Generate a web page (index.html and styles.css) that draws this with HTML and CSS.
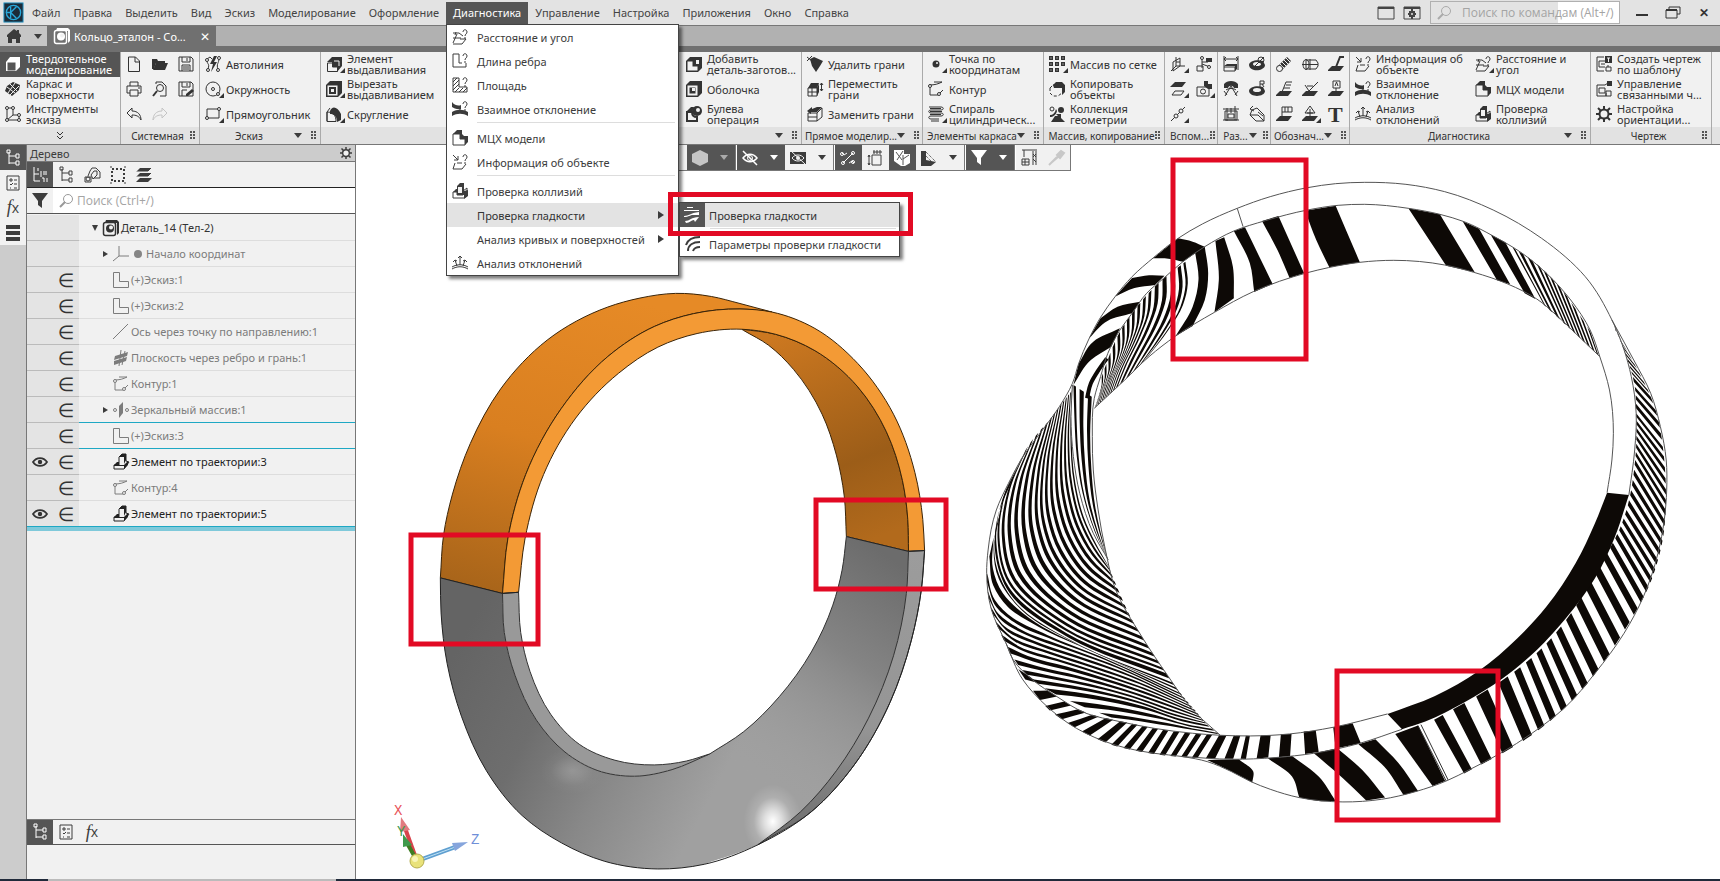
FILE: index.html
```html
<!DOCTYPE html>
<html lang="ru">
<head>
  <meta charset="UTF-8">
  <meta name="viewport" content="width=device-width, initial-scale=1.0">
  <title>Кольцо_эталон</title>
  <link rel="stylesheet" href="styles.css">
</head>
<body>
  <!-- Icon set -->
  <svg class="icon-set" aria-hidden="true">
    <defs>
      <g id="i-app"><rect width="20" height="20" fill="#1d2b38" stroke="#1d8fc0"/><circle cx="10" cy="10" r="7.5" fill="none" stroke="#29a9dc" stroke-width="1.4"/><path d="M7 4v12M7 10l6-6M7 10l6 6M2 10h5" fill="none" stroke="#29a9dc" stroke-width="1.4"/></g>
      <g id="i-home"><path d="M8 1L1 7v2h1v6h4v-4h4v4h4V9h1V7l-2-2V2h-2v1z" fill="currentColor"/></g>
      <g id="i-part"><rect x="0.5" y="2.500" width="12" height="13" rx="2" fill="none" stroke="currentColor" stroke-width="1.500"/><path d="M3 0h11l2 2v11l-2 2V3H2z" fill="currentColor"/><circle cx="7" cy="8.500" r="4" fill="currentColor"/><circle cx="8" cy="7.500" r="2" class="hole"/></g>
      <g id="i-cube"><path d="M1 6l4-5h10v10l-4 4H1z" fill="currentColor"/><rect x="2.500" y="6.500" width="8" height="8" class="cube-face"/></g>
      <g id="i-surf"><path d="M8 1l7 3-1 5-7 6-7-5 2-5z" fill="currentColor"/><path d="M5 3l7 7M2 6l8 6M10 2L3 12M14 5L5 14" stroke="#f1f1f1"/></g>
      <g id="i-sketch"><path d="M2 1v13h12V9H8V2H2M2 14L8 9" class="ln"/><circle cx="2" cy="2" r="1.500" class="dot"/><circle cx="8" cy="2" r="1.500" class="dot"/><circle cx="2" cy="14" r="1.500" class="dot"/><circle cx="14" cy="14" r="1.500" class="dot"/><circle cx="14" cy="9" r="1.500" class="dot"/></g>
      <g id="i-chevrons"><path d="M5 4l3 3 3-3M5 8l3 3 3-3" class="ln"/></g>
      <g id="i-file"><path d="M2.500 1h7l4 4v10.500h-11zM9 1v5h5" class="ln"/></g>
      <g id="i-open"><path d="M0 3h5l1 2h7v2H4L2 13H0z" fill="currentColor"/><path d="M4 7h12l-3 7H1z" fill="currentColor"/></g>
      <g id="i-save"><path d="M1 1h12l2 2v12H1zM4 1v5h8V1M4 15V9h8v6M9 2v3M5 11h6M5 13h6" class="ln"/></g>
      <g id="i-print"><path d="M4 5V1h8v4M4 12H1V5h14v7h-3M4 9h8v6H4zM12 7h2" class="ln"/></g>
      <g id="i-preview"><path d="M4 3V1h6l4 4v10H8" class="ln"/><circle cx="8" cy="7" r="3.500" class="ln"/><path d="M5 10l-4 5" class="ln thick"/></g>
      <g id="i-saveas"><path d="M1 1h12l2 2v12H1zM4 1v5h8V1M4 15V9h5M9 2v3" class="ln"/><path d="M8 13l6-5 2 2-6 5H8z" fill="currentColor"/></g>
      <g id="i-undo"><path d="M6 2L1 7l5 5V9c4 0 7 1 9 5 0-5-3-9-9-9z" class="ln"/></g>
      <g id="i-redo"><path d="M10 2l5 5-5 5V9c-4 0-7 1-9 5 0-5 3-9 9-9z" fill="none" stroke="#c4c4c4"/></g>
      <g id="i-autoline"><path d="M2 4c0 5 3 3 1 9M14 2c0 6-3 5-1 12M2 3l3-2 2 2" class="ln"/><path d="M9 0L5 8h3l-2 8 6-10H9l3-6z" fill="currentColor"/><circle cx="2" cy="4" r="1.500" class="dot"/><circle cx="3" cy="14" r="1.500" class="dot"/><circle cx="14" cy="2" r="1.500" class="dot"/><circle cx="13" cy="14" r="1.500" class="dot"/></g>
      <g id="i-circle"><circle cx="8" cy="8" r="7" class="ln"/><circle cx="8" cy="8" r="1.500" class="dot"/><circle cx="13" cy="13" r="1.500" class="dot"/></g>
      <g id="i-rect"><path d="M2 3h12v9H2z" class="ln"/><circle cx="14" cy="3" r="1.500" class="dot"/><circle cx="2" cy="12" r="1.500" class="dot"/></g>
      <g id="i-extrude"><path d="M1 6l5-5h10v9l-5 6v-5h-5V6z" fill="currentColor"/><path d="M1.500 7h5v4h5v4.500h-10z" fill="#f1f1f1" stroke="currentColor"/><path d="M8 5h5v5" fill="none" stroke="#f1f1f1"/></g>
      <g id="i-cut"><path d="M0 4l4-4h12v12l-4 4H0z" fill="currentColor"/><rect x="1.500" y="4.500" width="10" height="10" fill="#f1f1f1"/><rect x="4" y="7" width="5" height="5" fill="none" stroke="currentColor" stroke-width="2"/></g>
      <g id="i-fillet"><path d="M4 5C6 0 11 0 15 8v6l-4 2c0-6-3-8-7-8z" fill="currentColor"/><path d="M1 15V6l3-4M1 6c6 0 9 3 9 9.500H1z" class="ln"/></g>
      <g id="i-addpart"><path d="M0 5l4-4h12v11l-4 4H0z" fill="currentColor"/><path d="M1.500 5.500h5v5h5v4h-10z" fill="#f1f1f1"/><path d="M10 4h3v4h-3z" fill="#f1f1f1"/></g>
      <g id="i-shell"><path d="M0 4l4-4h12v12l-4 4H0z" fill="currentColor"/><rect x="1.500" y="4.500" width="10" height="10" fill="#f1f1f1"/><rect x="3.500" y="6.500" width="6" height="6" fill="currentColor"/><path d="M6 7h3v3H6z" fill="#f1f1f1"/></g>
      <g id="i-bool"><path d="M1 15V6h5c0 3 2 5 5 5v4z" class="ln thick"/><path d="M1 5l4-4h3L6 6z" fill="currentColor"/><circle cx="11" cy="5" r="5" fill="currentColor"/><circle cx="12" cy="4" r="2" fill="#f1f1f1"/></g>
      <g id="i-delface"><path d="M3 3l4-2 9 4-3 5-4 6-4-6z" fill="currentColor"/><path d="M0 1l5 4M5 0L0 5" class="ln"/></g>
      <g id="i-moveface"><path d="M1 7h9v8H1zM1 11h9M5 7v8" class="ln"/><path d="M1 7l3-5h8l-2 5zM10 7l2-4v8l-2 4z" fill="currentColor"/><path d="M14.500 2v8M13 4l1.500-2L16 4M13 8l1.500 2L16 8" class="ln"/></g>
      <g id="i-repface"><path d="M1 7h9v8H1zM1 11h9M10 7l5-5v9l-5 4" class="ln"/><path d="M0 5l5-4v2l5-2h5l-5 5H4v2z" fill="currentColor"/></g>
      <g id="i-point"><circle cx="8" cy="8" r="3.500" fill="currentColor"/><circle cx="9" cy="7" r="1" fill="#f1f1f1"/></g>
      <g id="i-contour"><path d="M1 4c6 0 9-1 13-3M2 5v9h8l5-5M14 1h-8" class="ln"/><circle cx="2" cy="5" r="1.500" class="dot"/><circle cx="11" cy="13" r="1.500" class="dot"/></g>
      <g id="i-spiral"><path d="M1 1h12c3 0 3 3 0 3H3C0 4 0 7 3 7h10c3 0 3 3 0 3H3c-3 0-3 3 0 3h8M2 2.500h11M2 5.500h12M2 8.500h11M3 15h8" class="ln"/></g>
      <g id="i-grid"><path d="M0 0h4v4H0zM6 0h4v4H6zM12 0h4v4h-4zM0 6h4v4H0zM6 6h4v4H6zM12 6h4v4h-4zM0 12h4v4H0zM6 12h4v4H6z" fill="currentColor"/><path d="M1.500 1.500h1v1h-1zM7.500 1.500h1v1h-1zM13.500 1.500h1v1h-1zM1.500 7.500h1v1h-1zM7.500 7.500h1v1h-1zM13.500 7.500h1v1h-1zM1.500 13.500h1v1h-1zM7.500 13.500h1v1h-1z" fill="#f1f1f1"/></g>
      <g id="i-copy"><path d="M4 4l3-3h6l3 3v7l-3 3V7H5z" fill="currentColor"/><path d="M4 4h6l3 3M1 7l3-3M1 7v5l3 3h5l4-3" class="ln" stroke-dasharray="3 2"/></g>
      <g id="i-coll"><circle cx="3" cy="3" r="2" class="ln"/><circle cx="12" cy="4" r="3" fill="currentColor"/><path d="M2 16l4-6h3l-2-2h5v4l4 4zM1 9c3 0 5-2 6-6l1 2c-1 4-4 6-7 6z" fill="currentColor"/></g>
      <g id="i-plane3"><path d="M6 1v9l-5 5M6 10h9M3 6l7-4v8l-7 5zM6 6h4" class="ln"/></g>
      <g id="i-lcs"><path d="M6 2v10M6 6h6M6 8l8 3M1 10h6v5H1z" class="ln"/><path d="M10 2h6v4h-6z" fill="currentColor"/><circle cx="6" cy="2" r="1.500" class="dot"/><circle cx="13" cy="11" r="1.500" class="dot"/></g>
      <g id="i-planes"><path d="M5 1h11l-4 5H0z" fill="currentColor"/><path d="M5 10h9l-3 4H2z" class="ln"/></g>
      <g id="i-cam"><path d="M1 6h12v9H1z" class="ln"/><circle cx="7" cy="10.500" r="2.500" class="ln"/><path d="M8 0h4v3h4v5h-4L8 5z" fill="currentColor"/></g>
      <g id="i-axis"><path d="M1 15L15 1" class="ln"/><circle cx="6" cy="10" r="2" class="dot"/><circle cx="11" cy="5" r="2" class="dot"/></g>
      <g id="i-dim1"><path d="M1 0v11M15 0v14M1 3h14M1 3l2-2M1 3l2 2M15 3l-2-2M15 3l-2 2M1 11h11v4H1z" class="ln"/><path d="M1 10l3-2h10v5l-2 2v-5z" fill="currentColor"/></g>
      <g id="i-dim2"><path d="M0 9c0-4 8-6 14-4l2 4c0 6-15 8-16 0z" fill="currentColor"/><ellipse cx="8" cy="8" rx="4" ry="2" fill="#f1f1f1"/><circle cx="12" cy="4" r="3" class="ln"/><path d="M3 13L15 1" class="ln"/></g>
      <g id="i-dim3"><path d="M1 3c3-4 11-4 14 0v4h-4c-1-3-5-3-6 0H1z" fill="currentColor"/><path d="M8 5l-6 10M8 5l6 10M3 9c2-2 8-2 10 0M1 10l3 4M15 10l-3 4" class="ln"/></g>
      <g id="i-dim4"><path d="M0 10c0-4 8-6 14-4l2 4c0 6-15 7-16 0z" fill="currentColor"/><ellipse cx="8" cy="9" rx="4" ry="2" fill="#f1f1f1"/><path d="M11 6V0h4v3h-4M13 3l2 3" class="ln"/></g>
      <g id="i-dim5"><path d="M2 5h12v9H2zM5 8h6v4H5zM4 2v13M12 0v14M0 3h16M0 14h16M8 2v5" class="ln"/></g>
      <g id="i-dim6"><path d="M3 4L1 9l6 6h8V9L8 2zM1 9h8l6 6M4 0L1 3l4 2M9 6l5 4" class="ln"/></g>
      <g id="i-thread"><path d="M1 11L11 1l4 4L5 15z" fill="currentColor"/><path d="M4 8l4 4M6 6l4 4M8 4l4 4M10 2l4 4" stroke="#f1f1f1"/><circle cx="3.500" cy="12.500" r="3" class="dot"/></g>
      <g id="i-mark"><path d="M4 4h10l2 3v3l-2 3H4zM0 8.500h16M8 3v11" class="ln"/><ellipse cx="4" cy="8.500" rx="3" ry="5" class="ln"/></g>
      <g id="i-lead"><path d="M0 14l4-4h12l-4 5H0z" fill="currentColor"/><path d="M16 1h-4L8 11" class="ln thick"/></g>
      <g id="i-base"><path d="M0 14l4-4h12l-4 5H0z" fill="currentColor"/><path d="M16 1h-6L6 11M10 4h5M8 7h6" class="ln"/></g>
      <g id="i-rough"><path d="M0 14l4-4h12l-4 5H0z" fill="currentColor"/><path d="M3 4l4 6 9-9M5 5h6" class="ln"/></g>
      <g id="i-datum"><path d="M0 14l4-4h12l-4 5H0z" fill="currentColor"/><path d="M5 0h7v7H5zM8 7v4M7 5l1.500-4L10 5" class="ln"/></g>
      <g id="i-tol"><path d="M0 14l4-4h12l-4 5H0z" fill="currentColor"/><path d="M6 1h10v5H6zM9 1v5M12 1v5M6 6v5" class="ln"/></g>
      <g id="i-pos"><path d="M0 14l4-4h12l-4 5H0z" fill="currentColor"/><path d="M8 0l5 7H3zM8 3v8M5 7h6" class="ln"/></g>
      <g id="i-info"><path d="M1 1l5 5M6 2v4H2M3 9l-2 6h9l4-5M5 9h5" class="ln"/><path d="M11 3c0-3 4-3 4 0 0 2-2 2-2 4M13 8v2" class="ln"/></g>
      <g id="i-angle"><path d="M1 4h6M4 3l-1 3M7 4l4 3M1 9h8M5 5l-4 9M1 15h9l4-5H8" class="ln"/><path d="M11 3c0-3 4-3 4 0 0 2-2 2-2 4M13 8v2" class="ln"/></g>
      <g id="i-edge"><path d="M1 1v13h13v-4M1 1h6v9h3" class="ln"/><path d="M11 3c0-3 4-3 4 0 0 2-2 2-2 4M13 8v2" class="ln"/></g>
      <g id="i-area"><path d="M1 1h6v9h8v5H1zM1 5l4-4M1 9l6-6M1 13l6-6M3 15l4-4M7 15l4-4M11 15l4-4" class="ln"/><path d="M11 3c0-3 4-3 4 0 0 2-2 2-2 4M13 8v2" class="ln"/></g>
      <g id="i-dev"><path d="M0 1c3 4 7 4 9 3v4C5 9 2 7 0 6zM0 11c5-3 11-3 16 0v4c-5-3-11-3-16 0z" fill="currentColor"/><path d="M8 7v4M6 9l2 2 2-2" class="ln"/><path d="M11 3c0-3 4-3 4 0 0 2-2 2-2 4M13 8v2" class="ln"/></g>
      <g id="i-mass"><path d="M1 4l4-4h5v4l2 2h4v6l-3 3V9H8V4z" fill="currentColor"/><path d="M1 4h7v5h5v6H1z" class="ln"/></g>
      <g id="i-coli"><path d="M1 9h4v3h6V8l4-3v8l-3 2H1z" class="ln"/><path d="M1 9l3-3h1V3l3-3h4v8l4-1v6l-4 3v-4H5V9z" fill="currentColor"/><path d="M6 4h4v6H6z" fill="#f1f1f1"/></g>
      <g id="i-curv"><path d="M0 14c5-3 11-3 16 0M0 12c5-3 11-3 16 0M8 1v9M3 5l2 6M13 5l-2 6M6 3l2-2 2 2M1 7l2-2 2 1M15 7l-2-2-2 1" class="ln"/></g>
      <g id="i-zebra"><path d="M3 0h6v1H3zM0 3h15v1H0zM0 9c5 0 6-3 15-4v3H9c-3 0-4 2-9 2zM1 14c5 0 6-4 14-4l-4 5-1-2c-3 0-4 3-8 3z" fill="currentColor"/></g>
      <g id="i-zparam"><path d="M1 9C3 3 8 1 15 1M3 15C3 9 8 6 15 6M8 15c1-3 3-4 7-4" fill="none" stroke="currentColor" stroke-width="2"/></g>
      <g id="i-draw"><path d="M1 1h7M1 1v14h7M3 5h6M3 5v6h6M5 8h4M10 11h5v4h-5zM12 9v2" class="ln"/><path d="M9 0h7v7H9z" fill="currentColor"/><path d="M11 2h3M12.500 2v4" stroke="#f1f1f1"/></g>
      <g id="i-link"><path d="M9 4H1v11h9v-3M3 7h6v5H3zM10 10h5v5h-5zM9 4l3-2" class="ln"/><path d="M11 0h5v5h-5z" fill="currentColor"/></g>
      <g id="i-gear"><path d="M8 0v16M0 8h16M2 2l12 12M14 2L2 14" stroke="currentColor" stroke-width="2"/><circle cx="8" cy="8" r="4.500" class="dot thick"/></g>
      <g id="i-tree"><path d="M4 2v12M4 6h7M4 13h7M11 4h3v4h-3zM11 11h3v4h-3zM2 0h3v3H2z" class="ln"/></g>
      <g id="i-treenum"><path d="M2 0v14h6M2 7h5M9 4v6M12 4v4M14 4v4M10 11h2v4M15 11v4M6 1v3" class="ln"/></g>
      <g id="i-list"><path d="M2 1h12v14H2zM5 4h2v2H5zM9 5h3M5 9l1 1 2-2M9 9h3M5 13l1 0M9 13h3" class="ln"/></g>
      <g id="i-stack"><path d="M1 0h14v4H1zM1 6h14v4H1zM1 12h14v4H1z" fill="currentColor"/></g>
      <g id="i-rel"><path d="M1 10h6v5H1zM4 9l2-5 2-3h4l4 4v6h-6" class="ln"/><path d="M7 8l3-4h3v4l-4 4z" class="ln"/><circle cx="4" cy="12" r="2" class="ln"/></g>
      <g id="i-sel"><path d="M2 2h12v12H2z" class="ln thick" stroke-dasharray="2 2"/><path d="M0 0h2M14 0h2M0 16h2M14 16h2" class="ln"/></g>
      <g id="i-layers"><path d="M4 1h12l-4 4H0zM4 6h12l-4 4H0zM4 11h12l-4 4H0z" fill="currentColor"/><path d="M0 5h12l4-4M0 10h12l4-4" fill="none" stroke="#f1f1f1"/></g>
      <g id="i-filter"><path d="M0 0h16L10 8v7l-4-3V8z" fill="currentColor"/></g>
      <g id="i-search"><circle cx="9" cy="6" r="4.500" fill="none" stroke="currentColor"/><path d="M6 9l-5 5" stroke="currentColor" stroke-width="2"/></g>
      <g id="i-origin"><path d="M6 0v10H16M6 10l-6 5" class="ln"/></g>
      <g id="i-lshape"><path d="M0.500 0.500h6v9h9v6h-15z" class="ln"/></g>
      <g id="i-line"><path d="M0 15L15 0" class="ln"/></g>
      <g id="i-planeedge"><path d="M2 6l13-4-1 4-13 4zM1 11l13-4-1 4-12 4z" fill="currentColor"/><path d="M8 0l-2 16M12 1l-3 14" stroke="currentColor"/></g>
      <g id="i-mirror"><path d="M6 4l4-4v11l-4 5z" fill="currentColor"/><circle cx="2" cy="8" r="1.500" class="ln"/><circle cx="14" cy="8" r="1.500" class="ln"/></g>
      <g id="i-sweep"><path d="M1 11h5V3l3-3h4v7l3 1-5 7H1z" class="ln"/><path d="M6 3l3-3h4v6l-2 4V3zM1 11l3-3h2v3h5l4-4v4l-4 4v-3H1z" fill="currentColor"/></g>
      <g id="i-eye"><path d="M0 8c4-6 12-6 16 0-4 6-12 6-16 0z" fill="none" stroke="currentColor" stroke-width="2"/><circle cx="8" cy="8" r="2.500" fill="currentColor"/></g>
      <g id="i-eyeoff"><path d="M1 8c4-5 10-5 14 0-4 5-10 5-14 0zM1 1l14 14" fill="none" stroke="currentColor" stroke-width="1.500"/><circle cx="8" cy="8" r="2.500" fill="none" stroke="currentColor"/></g>
      <g id="i-eyebox"><path d="M0 2h16v12H0z" fill="currentColor"/><path d="M2 8c3-4 9-4 12 0-3 4-9 4-12 0zM1 1l14 13" fill="none" stroke="#f1f1f1"/><circle cx="8" cy="8" r="2" fill="#f1f1f1"/></g>
      <g id="i-hex"><path d="M8 0l8 4v8l-8 4-8-4V4z" fill="currentColor"/></g>
      <g id="i-pts"><path d="M3 13L13 3M2 3l2 2 3-2M9 13l3-2 2 2" class="ln"/><circle cx="2" cy="4" r="1.500" class="ln"/><circle cx="13" cy="12" r="1.500" class="ln"/><circle cx="3" cy="13" r="1.500" class="ln"/><circle cx="13" cy="3" r="1.500" class="ln"/></g>
      <g id="i-box3"><path d="M5 5h9v10H5zM2 5v10M1 7l1-2 1 2M1 13l1 2 1-2M6 2h9M7 0v4M10 0v4M13 0v4" class="ln"/></g>
      <g id="i-facet"><path d="M0 0h10v4h6v9l-5 3H7l-7-5z" fill="currentColor"/><path d="M2 2l6 8M9 1L3 10M9 5v10M9 9l6-4" stroke="#555"/></g>
      <g id="i-corner"><path d="M0 1h5v9l10 2-5 4H0z" fill="currentColor"/><path d="M5 2l10 10M5 6l7 7" class="ln" stroke-dasharray="1 1"/></g>
      <g id="i-crane"><path d="M1 0h15M12 1v14M15 1v14M12 4l3 3M15 4l-3 3M12 9l3 3M3 0v7M1 9h7v6H1zM4 9v6M1 12h7" class="ln"/></g>
      <g id="i-drop"><path d="M1 15l8-8M3 13l7-6M9 5l4-4 3 2-4 5z" fill="#c8c8c8" stroke="#c8c8c8" stroke-width="2"/></g>
      <g id="i-win"><path d="M0 2h16v12H0z" class="ln"/><path d="M0 2h16v2H0z" fill="currentColor"/></g>
      <g id="i-wingear"><path d="M0 2h16v12H0z" class="ln"/><path d="M0 2h16v2H0zM5 6h6v6H5zM7 4h2v10H7zM4 8h8v2H4z" fill="currentColor"/><circle cx="8" cy="9" r="1" fill="#e3e3e3"/></g>
      <g id="i-restore"><path d="M4 5V2h11v7h-3M1 5h11v8H1z" class="ln"/><path d="M1 4h11v2H1z" fill="currentColor"/></g>
    </defs>
  </svg>

  <header class="menubar">
    <svg class="logo" viewBox="-1 -1 22 22"><use href="#i-app"/></svg>
    <nav class="menus">
      <button>Файл</button>
      <button>Правка</button>
      <button>Выделить</button>
      <button>Вид</button>
      <button>Эскиз</button>
      <button>Моделирование</button>
      <button>Оформление</button>
      <div class="menu-open">
        <button class="active">Диагностика</button>
        <div class="dropdown">
          <button><svg class="icon"><use href="#i-angle"/></svg>Расстояние и угол</button>
          <button><svg class="icon"><use href="#i-edge"/></svg>Длина ребра</button>
          <button><svg class="icon"><use href="#i-area"/></svg>Площадь</button>
          <button><svg class="icon"><use href="#i-dev"/></svg>Взаимное отклонение</button>
          <hr>
          <button><svg class="icon"><use href="#i-mass"/></svg>МЦХ модели</button>
          <button><svg class="icon"><use href="#i-info"/></svg>Информация об объекте</button>
          <hr>
          <button><svg class="icon"><use href="#i-coli"/></svg>Проверка коллизий</button>
          <div class="has-sub">
            <button class="hover"><i class="icon"></i>Проверка гладкости<i class="arrow-right"></i></button>
            <div class="dropdown submenu">
              <button class="hover checked"><svg class="icon"><use href="#i-zebra"/></svg>Проверка гладкости</button>
              <hr>
              <button><svg class="icon"><use href="#i-zparam"/></svg>Параметры проверки гладкости</button>
              <div class="callout"></div>
            </div>
          </div>
          <button><i class="icon"></i>Анализ кривых и поверхностей<i class="arrow-right"></i></button>
          <button><svg class="icon"><use href="#i-curv"/></svg>Анализ отклонений</button>
        </div>
      </div>
      <button>Управление</button>
      <button>Настройка</button>
      <button>Приложения</button>
      <button>Окно</button>
      <button>Справка</button>
    </nav>
    <div class="window-tools">
      <button aria-label="Экран"><svg class="icon"><use href="#i-win"/></svg></button>
      <button aria-label="Вид окна"><svg class="icon"><use href="#i-wingear"/></svg></button>
      <label class="command-search">
        <svg class="icon"><use href="#i-search"/></svg>
        <input type="text" placeholder="Поиск по командам (Alt+/)" aria-label="Поиск по командам">
      </label>
      <button class="win-btn" aria-label="Свернуть"><i class="minimize"></i></button>
      <button class="win-btn" aria-label="Восстановить"><svg class="icon"><use href="#i-restore"/></svg></button>
      <button class="win-btn close" aria-label="Закрыть">✕</button>
    </div>
  </header>

  <div class="tabs">
    <button class="home" aria-label="Главная"><svg class="icon"><use href="#i-home"/></svg><i class="arrow-down"></i></button>
    <div class="tab"><svg class="icon"><use href="#i-part"/></svg><span>Кольцо_эталон - Со...</span><button aria-label="Закрыть вкладку">✕</button></div>
  </div>

  <div class="ribbon">
    <section class="group modes">
      <div class="cols">
        <button class="tool on"><svg class="icon"><use href="#i-cube"/></svg><span>Твердотельное моделирование</span></button>
        <button class="tool"><svg class="icon"><use href="#i-surf"/></svg><span>Каркас и поверхности</span></button>
        <button class="tool"><svg class="icon"><use href="#i-sketch"/></svg><span>Инструменты эскиза</span></button>
      </div>
      <div class="group-name"><svg class="icon"><use href="#i-chevrons"/></svg></div>
    </section>
    <section class="group small three">
      <div class="cols">
        <button class="tool"><svg class="icon"><use href="#i-file"/></svg></button>
        <button class="tool"><svg class="icon"><use href="#i-print"/></svg></button>
        <button class="tool"><svg class="icon"><use href="#i-undo"/></svg></button>
        <button class="tool"><svg class="icon"><use href="#i-open"/></svg></button>
        <button class="tool"><svg class="icon"><use href="#i-preview"/></svg></button>
        <button class="tool"><svg class="icon"><use href="#i-redo"/></svg></button>
        <button class="tool"><svg class="icon"><use href="#i-save"/></svg></button>
        <button class="tool"><svg class="icon"><use href="#i-saveas"/></svg></button>
      </div>
      <div class="group-name"><span>Системная</span><i class="grip"></i></div>
    </section>
    <section class="group">
      <div class="cols">
        <button class="tool"><svg class="icon"><use href="#i-autoline"/></svg><span>Автолиния</span></button>
        <button class="tool more"><svg class="icon"><use href="#i-circle"/></svg><span>Окружность</span></button>
        <button class="tool more"><svg class="icon"><use href="#i-rect"/></svg><span>Прямоугольник</span></button>
      </div>
      <div class="group-name"><span>Эскиз</span><i class="arrow-down"></i><i class="grip"></i></div>
    </section>
    <section class="group quad">
      <div class="cols">
        <button class="tool more"><svg class="icon"><use href="#i-extrude"/></svg><span>Элемент выдавливания</span></button>
        <button class="tool more"><svg class="icon"><use href="#i-cut"/></svg><span>Вырезать выдавливанием</span></button>
        <button class="tool more"><svg class="icon"><use href="#i-fillet"/></svg><span>Скругление</span></button>
        <div class="spacer"></div>
        <button class="tool"><svg class="icon"><use href="#i-addpart"/></svg><span>Добавить деталь-заготов...</span></button>
        <button class="tool"><svg class="icon"><use href="#i-shell"/></svg><span>Оболочка</span></button>
        <button class="tool"><svg class="icon"><use href="#i-bool"/></svg><span>Булева<br>операция</span></button>
      </div>
      <div class="group-name"><span></span><i class="arrow-down"></i><i class="grip"></i></div>
    </section>
    <section class="group">
      <div class="cols">
        <button class="tool"><svg class="icon"><use href="#i-delface"/></svg><span>Удалить грани</span></button>
        <button class="tool"><svg class="icon"><use href="#i-moveface"/></svg><span>Переместить грани</span></button>
        <button class="tool"><svg class="icon"><use href="#i-repface"/></svg><span>Заменить грани</span></button>
      </div>
      <div class="group-name"><span>Прямое моделир...</span><i class="arrow-down"></i><i class="grip"></i></div>
    </section>
    <section class="group">
      <div class="cols">
        <button class="tool more"><svg class="icon"><use href="#i-point"/></svg><span>Точка по координатам</span></button>
        <button class="tool"><svg class="icon"><use href="#i-contour"/></svg><span>Контур</span></button>
        <button class="tool more"><svg class="icon"><use href="#i-spiral"/></svg><span>Спираль цилиндрическ...</span></button>
      </div>
      <div class="group-name"><span>Элементы каркаса</span><i class="arrow-down"></i><i class="grip"></i></div>
    </section>
    <section class="group">
      <div class="cols">
        <button class="tool more"><svg class="icon"><use href="#i-grid"/></svg><span>Массив по сетке</span></button>
        <button class="tool"><svg class="icon"><use href="#i-copy"/></svg><span>Копировать объекты</span></button>
        <button class="tool"><svg class="icon"><use href="#i-coll"/></svg><span>Коллекция геометрии</span></button>
      </div>
      <div class="group-name"><span>Массив, копирование</span><i class="grip"></i></div>
    </section>
    <section class="group small two">
      <div class="cols">
        <button class="tool more"><svg class="icon"><use href="#i-plane3"/></svg></button>
        <button class="tool more"><svg class="icon"><use href="#i-planes"/></svg></button>
        <button class="tool more"><svg class="icon"><use href="#i-axis"/></svg></button>
        <button class="tool"><svg class="icon"><use href="#i-lcs"/></svg></button>
        <button class="tool more"><svg class="icon"><use href="#i-cam"/></svg></button>
      </div>
      <div class="group-name"><span>Вспом...</span><i class="grip"></i></div>
    </section>
    <section class="group small two">
      <div class="cols">
        <button class="tool"><svg class="icon"><use href="#i-dim1"/></svg></button>
        <button class="tool"><svg class="icon"><use href="#i-dim3"/></svg></button>
        <button class="tool"><svg class="icon"><use href="#i-dim5"/></svg></button>
        <button class="tool"><svg class="icon"><use href="#i-dim2"/></svg></button>
        <button class="tool"><svg class="icon"><use href="#i-dim4"/></svg></button>
        <button class="tool"><svg class="icon"><use href="#i-dim6"/></svg></button>
      </div>
      <div class="group-name"><span>Раз...</span><i class="arrow-down"></i><i class="grip"></i></div>
    </section>
    <section class="group small three">
      <div class="cols">
        <button class="tool"><svg class="icon"><use href="#i-thread"/></svg></button>
        <button class="tool"><svg class="icon"><use href="#i-base"/></svg></button>
        <button class="tool"><svg class="icon"><use href="#i-tol"/></svg></button>
        <button class="tool"><svg class="icon"><use href="#i-mark"/></svg></button>
        <button class="tool"><svg class="icon"><use href="#i-rough"/></svg></button>
        <button class="tool more"><svg class="icon"><use href="#i-pos"/></svg></button>
        <button class="tool"><svg class="icon"><use href="#i-lead"/></svg></button>
        <button class="tool"><svg class="icon"><use href="#i-datum"/></svg></button>
        <button class="tool letter">T</button>
      </div>
      <div class="group-name"><span>Обознач...</span><i class="arrow-down"></i><i class="grip"></i></div>
    </section>
    <section class="group pair">
      <div class="cols">
        <button class="tool"><svg class="icon"><use href="#i-info"/></svg><span>Информация об объекте</span></button>
        <button class="tool"><svg class="icon"><use href="#i-dev"/></svg><span>Взаимное отклонение</span></button>
        <button class="tool"><svg class="icon"><use href="#i-curv"/></svg><span>Анализ отклонений</span></button>
        <button class="tool more"><svg class="icon"><use href="#i-angle"/></svg><span>Расстояние и угол</span></button>
        <button class="tool"><svg class="icon"><use href="#i-mass"/></svg><span>МЦХ модели</span></button>
        <button class="tool"><svg class="icon"><use href="#i-coli"/></svg><span>Проверка коллизий</span></button>
      </div>
      <div class="group-name"><span>Диагностика</span><i class="arrow-down"></i><i class="grip"></i></div>
    </section>
    <section class="group">
      <div class="cols">
        <button class="tool"><svg class="icon"><use href="#i-draw"/></svg><span>Создать чертеж по шаблону</span></button>
        <button class="tool"><svg class="icon"><use href="#i-link"/></svg><span>Управление связанными ч...</span></button>
        <button class="tool"><svg class="icon"><use href="#i-gear"/></svg><span>Настройка ориентации...</span></button>
      </div>
      <div class="group-name"><span>Чертеж</span><i class="grip"></i></div>
    </section>
    <section class="group rest"><div class="cols"></div><div class="group-name"></div></section>
  </div>

  <main class="workspace">
    <nav class="rail">
      <button class="on" aria-label="Дерево"><svg class="icon"><use href="#i-tree"/></svg></button>
      <button aria-label="Параметры"><svg class="icon"><use href="#i-list"/></svg></button>
      <button class="fx"><i>f</i>x</button>
      <button aria-label="Слои"><svg class="icon"><use href="#i-stack"/></svg></button>
    </nav>

    <aside class="panel">
      <div class="panel-head"><h2>Дерево</h2><svg class="icon" viewBox="0 0 16 16"><use href="#i-gear"/></svg></div>
      <div class="panel-tools">
        <button class="on" aria-label="Структура"><svg class="icon"><use href="#i-treenum"/></svg></button>
        <button aria-label="Дерево"><svg class="icon"><use href="#i-tree"/></svg></button>
        <button aria-label="Отношения"><svg class="icon"><use href="#i-rel"/></svg></button>
        <button aria-label="Область"><svg class="icon"><use href="#i-sel"/></svg></button>
        <button aria-label="Слои"><svg class="icon"><use href="#i-layers"/></svg></button>
      </div>
      <div class="panel-search">
        <button aria-label="Фильтр"><svg class="icon"><use href="#i-filter"/></svg></button>
        <svg class="icon glass"><use href="#i-search"/></svg>
        <input type="text" placeholder="Поиск (Ctrl+/)" aria-label="Поиск">
      </div>
      <ul class="tree">
        <li class="root"><b></b><b></b><div><i class="arrow-open"></i><svg class="icon"><use href="#i-part"/></svg>Деталь_14 (Тел-2)</div></li>
        <li><b></b><b></b><div><i class="arrow-right"></i><svg class="icon"><use href="#i-origin"/></svg><i class="bullet"></i>Начало координат</div></li>
        <li><b></b><b>∈</b><div><svg class="icon"><use href="#i-lshape"/></svg><em>(+)</em>Эскиз:1</div></li>
        <li><b></b><b>∈</b><div><svg class="icon"><use href="#i-lshape"/></svg><em>(+)</em>Эскиз:2</div></li>
        <li><b></b><b>∈</b><div><svg class="icon"><use href="#i-line"/></svg>Ось через точку по направлению:1</div></li>
        <li><b></b><b>∈</b><div><svg class="icon"><use href="#i-planeedge"/></svg>Плоскость через ребро и грань:1</div></li>
        <li><b></b><b>∈</b><div><svg class="icon"><use href="#i-contour"/></svg>Контур:1</div></li>
        <li class="edit"><b></b><b>∈</b><div><i class="arrow-right"></i><svg class="icon"><use href="#i-mirror"/></svg>Зеркальный массив:1</div></li>
        <li class="edit"><b></b><b>∈</b><div><svg class="icon"><use href="#i-lshape"/></svg><em>(+)</em>Эскиз:3</div></li>
        <li class="shown"><b><svg class="icon" viewBox="0 0 16 16"><use href="#i-eye"/></svg></b><b>∈</b><div><svg class="icon"><use href="#i-sweep"/></svg>Элемент по траектории:3</div></li>
        <li><b></b><b>∈</b><div><svg class="icon"><use href="#i-contour"/></svg>Контур:4</div></li>
        <li class="shown"><b><svg class="icon" viewBox="0 0 16 16"><use href="#i-eye"/></svg></b><b>∈</b><div><svg class="icon"><use href="#i-sweep"/></svg>Элемент по траектории:5</div></li>
      </ul>
      <div class="panel-foot">
        <button class="on" aria-label="Дерево"><svg class="icon"><use href="#i-tree"/></svg></button>
        <button aria-label="Параметры"><svg class="icon"><use href="#i-list"/></svg></button>
        <button class="fx"><i>f</i>x</button>
      </div>
    </aside>

    <section class="viewport">
      <div class="view-tools">
        <button aria-label="Ориентация"></button>
        <button class="on wide" aria-label="Отображение"><svg class="icon pale"><use href="#i-hex"/></svg><i class="arrow-down pale"></i></button>
        <button class="on wide start" aria-label="Скрыть"><svg class="icon"><use href="#i-eyeoff"/></svg><i class="arrow-down"></i></button>
        <button class="wide" aria-label="Скрыть объекты"><svg class="icon"><use href="#i-eyebox"/></svg><i class="arrow-down"></i></button>
        <button class="on start" aria-label="Точки"><svg class="icon"><use href="#i-pts"/></svg></button>
        <button aria-label="Размеры"><svg class="icon"><use href="#i-box3"/></svg></button>
        <button class="on" aria-label="Грани"><svg class="icon"><use href="#i-facet"/></svg></button>
        <button class="wide" aria-label="Сечение"><svg class="icon"><use href="#i-corner"/></svg><i class="arrow-down"></i></button>
        <button class="on wide start" aria-label="Фильтр"><svg class="icon"><use href="#i-filter"/></svg><i class="arrow-down"></i></button>
        <button class="start" aria-label="Сборка"><svg class="icon"><use href="#i-crane"/></svg></button>
        <button aria-label="Свойства"><svg class="icon"><use href="#i-drop"/></svg></button>
      </div>
      <svg class="scene" viewBox="356 145 1364 734" preserveAspectRatio="xMinYMin meet">
        <defs>
          <linearGradient id="orangeOut" x1="0.5" y1="0" x2="0.2" y2="1"><stop offset="0" stop-color="#e68a26"/><stop offset="0.5" stop-color="#d97f20"/><stop offset="1" stop-color="#a9651a"/></linearGradient>
          <linearGradient id="orangeIn" x1="0.3" y1="0" x2="0.6" y2="1"><stop offset="0" stop-color="#cc7820"/><stop offset="0.65" stop-color="#9c5d18"/><stop offset="1" stop-color="#b26a1c"/></linearGradient>
          <linearGradient id="grayBody" gradientUnits="userSpaceOnUse" x1="200" y1="950" x2="900" y2="1350"><stop offset="0" stop-color="#646464"/><stop offset="0.35" stop-color="#6e6e6e"/><stop offset="0.65" stop-color="#888"/><stop offset="1" stop-color="#a0a0a0"/></linearGradient>
          <linearGradient id="grayRight" gradientUnits="userSpaceOnUse" x1="1370" y1="720" x2="1000" y2="1300"><stop offset="0" stop-color="#6c6c6c"/><stop offset="0.4" stop-color="#848484"/><stop offset="1" stop-color="#a2a2a2" stop-opacity="0"/></linearGradient>
          <linearGradient id="grayFace" x1="0" y1="0" x2="0" y2="1"><stop offset="0" stop-color="#9c9c9c"/><stop offset="0.6" stop-color="#959595"/><stop offset="1" stop-color="#6a6a6a"/></linearGradient>
          <radialGradient id="glow"><stop offset="0" stop-color="#fff"/><stop offset="0.3" stop-color="#fff" stop-opacity="0.65"/><stop offset="0.65" stop-color="#fff" stop-opacity="0.15"/><stop offset="1" stop-color="#fff" stop-opacity="0"/></radialGradient>
        </defs>
        <g id="solid" transform="translate(390 270) scale(0.3571 0.3897)"></g>
        <g id="zebra" transform="translate(960 150) scale(0.4847 0.3333)"></g>
        <g class="axes">
          <path d="M417 861L458 846" stroke="#5f9fd0" stroke-width="4"/><path d="M417 861L458 846" stroke="#bfe2f5" stroke-width="1"/>
          <path d="M468 842l-16 1 3 8z" fill="#86a5dc"/>
          <path d="M417 861L405 828" stroke="#d8434b" stroke-width="4"/><path d="M401 817l-1 15 10-2z" fill="#e27b80"/>
          <path d="M416 859l-9-16" stroke="#3d7d22" stroke-width="4"/><path d="M403 834l0 13 9-2z" fill="#3f9a4c"/>
          <circle cx="417" cy="861" r="7" fill="#e9e27a" stroke="#b5ad4e"/><circle cx="415" cy="859" r="3" fill="#f8f5b8"/>
          <text x="394" y="815" fill="#e8535a">X</text>
          <text x="397" y="836" fill="#3f9a4c">Y</text>
          <text x="471" y="844" fill="#6f8fd8">Z</text>
        </g>
        <g class="frames">
          <rect x="411" y="535" width="127" height="109"/>
          <rect x="816" y="500" width="130" height="89"/>
          <rect x="1173" y="160" width="133" height="199"/>
          <rect x="1337" y="671" width="161" height="149"/>
        </g>
      </svg>
    </section>
  </main>

  <footer class="taskbar"><i></i></footer>
  <script src="scene.js"></script>
</body>
</html>
```
FILE: styles.css
```css
*, *::before, *::after { box-sizing: border-box; margin: 0; padding: 0; }
body {
  font-family: "Noto Sans", "Open Sans", sans-serif;
  font-size: 11px;
  color: #3c3c3c;
  background: #fff;
  height: 100vh;
  display: flex;
  flex-direction: column;
  overflow: hidden;
}
button {
  font: inherit;
  color: inherit;
  background: none;
  border: 0;
  white-space: nowrap;
  cursor: pointer;
}
input { font: 12px "Open Sans", sans-serif; border: 0; outline: 0; background: none; min-width: 0; }
ul { list-style: none; }

/* Icons */
.icon-set { position: absolute; width: 0; height: 0; }
.icon { width: 16px; height: 16px; flex: none; display: block; overflow: visible; }
.ln { fill: none; stroke: currentColor; }
.dot { fill: #f1f1f1; stroke: currentColor; }
.thick { stroke-width: 2; }
.hole { fill: #f1f1f1; }
.cube-face { fill: #555; }
.arrow-down { flex: none; border: 4px solid transparent; border-top: 5px solid #3c3c3c; border-bottom: 0; }
.arrow-right { flex: none; border: 4px solid transparent; border-left: 6px solid #3c3c3c; border-right: 0; }
.arrow-open { flex: none; border: 3px solid transparent; border-top: 6px solid #3c3c3c; border-bottom: 0; }

/* Menu bar */
.menubar {
  display: flex;
  height: 26px;
  flex: none;
  padding-left: 3px;
  background: #e3e3e3;
  border-bottom: 1px solid #777;
  color: #444;
}
.logo { width: 21px; height: 21px; margin-top: 2px; }
.menus { display: flex; gap: 1px; padding: 2px 0 1px 2px; flex: 1; }
.menus > button, .menu-open > button { padding: 0 6px 2px; height: 22px; }
.menus .active { padding: 0 7px 2px; background: #555; color: #fff; }
.menu-open { position: relative; z-index: 5; }
.dropdown {
  position: absolute;
  left: 0;
  top: 22px;
  width: 233px;
  background: #fff;
  border: 1px solid #444;
  box-shadow: 3px 3px 3px rgba(0,0,0,0.5);
}
.dropdown button {
  display: flex;
  align-items: center;
  width: 100%;
  height: 24px;
  gap: 9px;
  padding-left: 5px;
  color: #3c3c3c;
}
.dropdown .hover { background: #e3e3e3; color: #333; }
.dropdown .arrow-right { margin-left: auto; margin-right: 14px; }
.dropdown hr { border: 0; border-top: 1px solid #ddd; margin: 1px 3px 3px 30px; }
.has-sub { position: relative; }
.submenu { left: 232px; top: -1px; width: 221px; }
.submenu .checked { padding-left: 0; gap: 4px; }
.submenu .checked .icon { width: 25px; height: 24px; padding: 4px; background: #555; color: #fff; }
.submenu button { gap: 8px; }
.callout { position: absolute; left: -12px; right: -14px; top: -11px; height: 44px; border: 5px solid #e20a24; }
.window-tools { display: flex; align-items: center; padding-right: 1px; color: #444; }
.window-tools > button { width: 26px; display: flex; }
.command-search {
  display: flex;
  align-items: center;
  gap: 9px;
  width: 190px;
  height: 23px;
  padding-left: 6px;
  border: 1px solid #b0b0b0;
  background: linear-gradient(to right, #e3e3e3 127px, #fff 127px);
  color: #aaa;
}
.command-search input { flex: 1; }
input::placeholder { color: #a4a4a4; }
.window-tools .win-btn { width: 31px; justify-content: center; color: #333; }
.window-tools .close { font-size: 12px; font-weight: bold; }
.command-search + .win-btn { margin-left: 6px; }
.minimize { width: 12px; height: 2px; background: #333; margin-top: 4px; }

/* Document tabs */
.tabs { display: flex; height: 26px; flex: none; background: #b1b1b1; border-bottom: 6px solid #707070; }
.home { display: flex; align-items: center; gap: 12px; width: 47px; padding-left: 6px; background: #c6c6c6; }
.tab { display: flex; align-items: center; width: 169px; padding-left: 7px; gap: 4px; background: #707070; color: #fff; }
.tab span { flex: 1; white-space: nowrap; }
.tab .hole { fill: #707070; }
.tab button { margin-right: 6px; font-size: 12px; }

/* Ribbon */
.ribbon { display: flex; height: 93px; flex: none; background: #f1f1f1; border-bottom: 1px solid #777; color: #333; }
.group { display: flex; flex-direction: column; width: 121px; flex: none; border-right: 1px solid #aaa; }
.group.three { width: 79px; }
.group.two { width: 53px; }
.group.pair { width: 241px; }
.group.quad { width: 481px; }
.group.rest { flex: 1; border-right: 0; }
.cols { display: grid; grid-auto-flow: column; grid-template-rows: repeat(3, 25px); grid-auto-columns: 120px; height: 75px; }
.small .cols { grid-auto-columns: 26px; }
.spacer { grid-row: span 3; grid-column: span 2; }
.tool { position: relative; display: flex; align-items: center; gap: 5px; padding: 0 0 1px 5px; text-align: left; }
.tool span { line-height: 11px; white-space: normal; width: 94px; }
.tool.on { background: #555; color: #fff; }
.more::after {
  content: "";
  position: absolute;
  left: 19px;
  bottom: 4px;
  border-left: 5px solid transparent;
  border-bottom: 5px solid #333;
}
.letter { font: bold 22px "Liberation Serif", serif; line-height: 25px; }
.group-name { display: flex; align-items: center; justify-content: center; flex: 1; padding: 0 4px; background: #e2e2e2; font-size: 10px; }
.group-name span { flex: 1; text-align: center; white-space: nowrap; }
.group-name .arrow-down { margin-right: 9px; }
.two .group-name { padding-right: 2px; }
.two .group-name .arrow-down { margin-right: 6px; }
.grip {
  width: 5px;
  height: 9px;
  flex: none;
  background: radial-gradient(circle at 1px 1px, #555 1px, transparent 1px) 0 0 / 3px 3px;
}

/* Workspace */
.workspace { display: flex; flex: 1; min-height: 0; }
.rail { width: 27px; flex: none; background: #ccc; border-right: 1px solid #777; }
.rail button, .panel-tools button, .panel-foot button, .panel-search button {
  display: flex;
  align-items: center;
  justify-content: center;
  width: 26px;
  height: 25px;
  background: #f1f1f1;
}
.rail .on, .panel .on { background: #555; color: #fff; }
.rail .fx, .panel .fx { font: 14px "Open Sans", sans-serif; line-height: 20px; }
.fx i { font: italic 18px "Liberation Serif", serif; }
.on .dot { fill: #555; }

.panel { display: flex; flex-direction: column; width: 329px; flex: none; background: #f1f1f1; border-right: 1px solid #777; }
.panel-head { display: flex; align-items: center; justify-content: space-between; height: 17px; padding: 0 3px; background: #ccc; border-bottom: 1px solid #777; }
.panel-head h2 { font-size: 11px; font-weight: normal; }
.panel-head .icon { width: 12px; height: 12px; }
.panel-head .dot { fill: #ccc; }
.panel-tools { display: flex; height: 26px; border-bottom: 1px solid #222; }
.panel-search { display: flex; align-items: center; height: 26px; background: #fff; border-bottom: 1px solid #555; }
.panel-search .glass { color: #999; width: 24px; padding-left: 6px; }
.panel-search input { flex: 1; }

.tree { flex: 1; padding-top: 1px; }
.tree li { display: flex; height: 26px; color: #7c7c7c; }
.tree b { width: 26px; background: #e4e4e4; border-bottom: 1px solid #bbb; font: 19px "DejaVu Sans", sans-serif; line-height: 22px; color: #333; display: flex; align-items: center; justify-content: center; }
.tree b .icon { width: 14px; }
.tree div { display: flex; align-items: center; flex: 1; gap: 2px; padding-left: 34px; border-bottom: 1px solid #ddd; }
.tree .arrow-right { margin: 0 3px 0 -10px; border-left-width: 5px; border-top-width: 3px; border-bottom-width: 3px; }
.tree .arrow-open { margin: 0 3px 0 0; }
.tree .root div { padding-left: 13px; color: #333; }
.tree .shown { color: #222; }
.tree em { font-style: normal; margin-right: -2px; }
.bullet { width: 8px; height: 8px; margin: 0 2px 0 3px; border-radius: 50%; background: #858585; }
.tree .edit div { border-bottom-color: #1ea8c4; }
.tree li:last-child { height: 30px; border-bottom: 4px solid #7fc9da; }
.tree li:last-child > * { border-bottom: 1px solid #1ea8c4; }
.panel-foot { display: flex; height: 60px; border-top: 1px solid #777; background: linear-gradient(#f1f1f1 24px, #555 24px, #555 25px, #f1f1f1 25px); }
.panel-foot button { height: 24px; }

/* 3D view */
.viewport { position: relative; flex: 1; min-width: 0; overflow: hidden; }
.scene { display: block; width: 100%; height: 100%; }
.view-tools { position: absolute; left: 303px; top: 0; display: flex; height: 26px; background: #f1f1f1; border: 1px solid #777; border-top: 0; }
.view-tools button { display: flex; align-items: center; gap: 12px; padding: 0 5px; width: 27px; }
.view-tools .wide { width: 48px; }
.view-tools .on { background: #555; color: #fff; }
.view-tools .start { box-shadow: -1px 0 #fff, -2px 0 #777; margin-left: 2px; }
.view-tools .on .arrow-down { border-top-color: #fff; }
.view-tools .pale, .view-tools .on .pale { color: #c4c4c4; border-top-color: #aaa; }
.scene #solid path, .scene #zebra path { vector-effect: non-scaling-stroke; }
.axes text { font: 14px "Liberation Mono", monospace; }
.frames rect { fill: none; stroke: #e20a24; stroke-width: 5; }

.taskbar { display: flex; height: 2px; flex: none; padding-left: 48px; background: #202a3a; }
.taskbar i { width: 288px; background: #bbb; }
```
FILE: scene.js
```js
const NS = 'http://www.w3.org/2000/svg';
const solid = document.getElementById('solid');
const zebra = document.getElementById('zebra');

const dist = (a, b) => Math.hypot(a[0] - b[0], a[1] - b[1]) || 1;

// Tangent at point i, weighted by the distance to its neighbours
function tangent(p, i) {
  const a = p[i - 1], b = p[i], c = p[i + 1];
  if (!a) return [0, 1].map(k => (c[k] - b[k]) / dist(b, c));
  if (!c) return [0, 1].map(k => (b[k] - a[k]) / dist(a, b));
  const d1 = dist(a, b), d2 = dist(b, c);
  return [0, 1].map(k => ((b[k] - a[k]) / d1 * d2 + (c[k] - b[k]) / d2 * d1) / (d1 + d2));
}

// Smooth curve through points, returned as path commands after the first point
function spline(p) {
  let d = '';
  for (let i = 0; i < p.length - 1; i++) {
    const b = p[i], c = p[i + 1], h = dist(b, c) / 3;
    const m = tangent(p, i), n = tangent(p, i + 1);
    d += `C${b[0] + m[0] * h} ${b[1] + m[1] * h} ${c[0] - n[0] * h} ${c[1] - n[1] * h} ${c[0]} ${c[1]}`;
  }
  return d;
}

function open(p) { return `M${p[0]}` + spline(p); }

// Area bounded by several curves, one after another
function area(...curves) {
  let d = `M${curves[0][0]}`;
  curves.forEach(c => { d += `L${c[0]}` + spline(c); });
  return d + 'Z';
}

function draw(g, d, fill, stroke, width) {
  const el = document.createElementNS(NS, 'path');
  el.setAttribute('d', d);
  el.setAttribute('fill', fill || 'none');
  if (stroke) {
    el.setAttribute('stroke', stroke);
    el.setAttribute('stroke-width', width || 1);
  }
  g.appendChild(el);
}

const rev = p => p.slice().reverse();

// ---- Shaded ring ----
const outTop = [[141,790],[150,680],[175,575],[225,445],[310,305],[440,180],[610,95],[700,72],[800,60],[900,68],[980,86],[1070,108]];
const faceOut = [[315,830],[330,690],[380,525],[480,355],[610,222],[740,145],[850,112],[980,100],[1070,108],[1190,150],[1310,240],[1410,370],[1470,520],[1492,640],[1497,720]];
const faceIn = [[360,827],[378,690],[430,525],[520,380],[640,265],[750,198],[860,163],[985,152],[1080,165],[1190,207],[1310,300],[1390,415],[1435,540],[1450,640],[1452,722]];
const backIn = [[990,155],[1060,193],[1130,255],[1210,370],[1250,475],[1272,580],[1278,684]];
const outBottom = [[141,790],[143,880],[160,1010],[200,1145],[270,1285],[370,1400],[480,1470],[600,1517],[750,1537],[880,1525],[1030,1475],[1180,1390],[1300,1270],[1400,1110],[1460,950],[1488,820],[1497,720]];
const rightEdge = [[1452,722],[1446,830],[1410,990],[1340,1150],[1250,1285],[1150,1390],[1030,1475]];
const lowOut = [[315,830],[320,930],[350,1040],[410,1155],[490,1237],[580,1284],[685,1299],[790,1282],[895,1242]];
const lowIn = [[360,827],[366,930],[392,1030],[450,1140],[530,1217],[630,1258],[740,1270],[830,1260],[895,1242]];
const holeRight = [[895,1242],[990,1185],[1090,1095],[1180,980],[1240,860],[1266,770],[1278,684]];

draw(solid, area(outTop, rev(faceOut.slice(0, 9))), 'url(#orangeOut)', '#3a2408');
draw(solid, area(backIn, rev(faceIn.slice(7))), 'url(#orangeIn)', '#3a2408');
draw(solid, area(faceOut, rev(faceIn)), '#f39a35', '#3a2408');

const body = area(outBottom, [[1452,722],[1278,684]], rev(holeRight), rev(lowOut));
draw(solid, body, 'url(#grayBody)');
draw(solid, area(rightEdge, [[1030,1475],[895,1242]], holeRight), 'url(#grayRight)');
function glow(cx, cy, rx, ry, opacity) {
  const el = document.createElementNS(NS, 'ellipse');
  Object.entries({ cx, cy, rx, ry, opacity, fill: 'url(#glow)' }).forEach(([k, v]) => el.setAttribute(k, v));
  solid.appendChild(el);
}
glow(1072, 1415, 82, 95, 1);
glow(510, 1285, 90, 60, 0.18);
// the highlight stops at the silhouette
draw(solid, area(outBottom.slice(9, 12), [[1180,1390],[1220,1600],[900,1600],[880,1525]]), '#fff');
draw(solid, area(rightEdge, outBottom.slice(10)), 'url(#grayFace)', '#333');
draw(solid, area(lowOut, rev(lowIn)), '#999', '#333');
draw(solid, open(outBottom), null, '#222');
draw(solid, open(holeRight), null, '#333');
draw(solid, 'M141 790L315 830L360 827M1278 684L1452 722L1497 720', null, '#222');

// ---- Zebra ring ----
const INK = '#0d0906';

// Stripes interpolated between key curves; counts[i] stripes go between keys[i] and keys[i + 1]
function stripes(keys, counts) {
  counts.forEach((n, k) => {
    const at = t => keys[k].map((p, j) => {
      const a = (keys[k - 1] || keys[k])[j], c = keys[k + 1][j], e = (keys[k + 2] || keys[k + 1])[j];
      return [0, 1].map(i => {
        const m0 = (c[i] - a[i]) / 2, m1 = (e[i] - p[i]) / 2;
        const t2 = t * t, t3 = t2 * t;
        return (2 * t3 - 3 * t2 + 1) * p[i] + (t3 - 2 * t2 + t) * m0 + (3 * t2 - 2 * t3) * c[i] + (t3 - t2) * m1;
      });
    });
    for (let s = 0; s < n; s++) {
      draw(zebra, area(at(s / n), rev(at((s + 0.5) / n))), INK);
    }
  });
}

// Left twisted surface
stripes([
  [[232,720],[230,850],[238,1000],[255,1100],[280,1180],[305,1245]],
  [[190,800],[165,960],[165,1130],[190,1230],[250,1330],[355,1410]],
  [[120,945],[85,1060],[75,1180],[100,1310],[220,1450],[425,1570]],
  [[56,1270],[72,1350],[110,1405],[180,1455],[290,1520],[455,1630]],
  [[97,1490],[140,1518],[220,1550],[310,1590],[400,1635],[490,1690]],
  [[175,1615],[240,1627],[310,1645],[380,1670],[450,1705],[510,1725]],
  [[330,1713],[360,1718],[400,1727],[440,1735],[490,1745],[537,1756]]
], [8, 7, 3, 5, 4, 3]);

// Narrow strip of the twist
const stripLeft = [[232,705],[229,800],[234,920],[247,1030],[275,1150],[306,1230]];
const stripRight = [[277,745],[273,860],[275,960],[285,1080],[306,1230]];
draw(zebra, area(stripLeft, rev(stripRight)), '#fff');
stripes([
  [[234,705],[236,800],[241,920],[253,1030],[278,1145],[303,1222]],
  [[277,745],[273,860],[275,960],[283,1080],[292,1150],[305,1228]]
], [3]);
draw(zebra, open([[303,625],[285,662],[270,700],[262,745]]), null, INK, 4);

// Upper left facet
draw(zebra, area([[450,265],[480,275],[505,290]], [[505,290],[460,335]], [[460,335],[430,326],[398,325]], [[398,325],[450,265]]), INK);
draw(zebra, area([[355,384],[390,376],[422,377]], [[422,377],[402,405]], [[402,405],[360,414],[320,440]], [[320,440],[355,384]]), INK);
draw(zebra, area([[290,505],[325,470],[372,455]], [[372,455],[355,490]], [[355,490],[305,512],[266,565]], [[266,565],[290,505]]), INK);
draw(zebra, area([[245,640],[275,575],[330,535]], [[330,535],[312,590]], [[312,590],[270,630],[234,705]], [[234,705],[245,640]]), INK);

// Fan on the inner surface
stripes([
  [[465,335],[470,400],[460,465],[430,540],[385,625]],
  [[395,420],[392,480],[372,560],[345,640],[325,710]],
  [[330,545],[330,600],[320,650],[305,700],[295,750]],
  [[290,690],[290,710],[287,730],[282,755],[277,775]]
], [5, 6, 5]);
draw(zebra, area([[485,305],[492,390],[480,470],[445,558]], [[445,558],[480,528]], [[480,528],[505,450],[512,370],[505,290]]), INK);
draw(zebra, area([[527,273],[534,390],[525,487]], [[525,487],[565,445]], [[565,445],[563,350],[545,262]]), INK);
draw(zebra, area([[565,243],[598,340],[607,426]], [[607,426],[645,402]], [[645,402],[588,232]]), INK);
draw(zebra, area([[623,213],[655,300],[680,384]], [[680,384],[710,370]], [[710,370],[657,198]]), INK);
draw(zebra, area([[712,182],[735,270],[762,352]], [[762,352],[825,337]], [[825,337],[775,167]]), INK);
draw(zebra, 'M925 175L990 193L1062 367L1003 347ZM1037 214L1071 236L1135 403L1108 391ZM1095 254L1125 277L1187 447L1165 430Z', INK);
stripes([
  [[1140,292],[1205,465]],
  [[1190,342],[1245,518]],
  [[1245,425],[1285,572]],
  [[1305,555],[1320,620]]
], [3, 4, 4]);

// Right outer surface
stripes([
  [[1350,525],[1352,540]],
  [[1388,680],[1425,740]],
  [[1395,790],[1450,890]],
  [[1393,930],[1456,1080]],
  [[1375,1080],[1440,1230]],
  [[1335,1210],[1398,1375]],
  [[1240,1430],[1295,1600]],
  [[1130,1580],[1180,1755]],
  [[965,1720],[1028,1880]]
], [9, 4, 6, 5, 5, 5, 5, 4]);

// Bottom of the outer surface
draw(zebra, 'M898 1752L945 1727L1001 1893L975 1908Z', INK);
draw(zebra, area([[822,1783],[875,1850],[915,1935]], [[915,1935],[945,1923]], [[945,1923],[905,1840],[857,1768]]), INK);
draw(zebra, area([[730,1810],[790,1885],[838,1952]], [[838,1952],[877,1943]], [[877,1943],[830,1860],[778,1795]]), INK);
draw(zebra, area([[635,1825],[685,1880],[700,1943]], [[700,1943],[740,1953],[775,1953]], [[775,1953],[740,1880],[685,1818]]), INK);
draw(zebra, area([[510,1830],[560,1865],[603,1898]], [[603,1898],[605,1865],[575,1828]]), INK);
draw(zebra, 'M945 1727L1003 1893M951 1724L1007 1890', null, '#333');

// Bottom facet
draw(zebra, 'M770 1732L810 1720L827 1780L775 1796ZM709 1745L734 1742L740 1806L712 1812ZM662 1753L684 1752L681 1818L658 1822ZM620 1757L641 1756L636 1823L612 1826Z', INK);
stripes([
  [[598,1758],[590,1827]],
  [[520,1755],[490,1824]],
  [[430,1742],[400,1812]],
  [[345,1718],[300,1778]],
  [[260,1688],[210,1708]],
  [[200,1640],[165,1650]],
  [[130,1565],[110,1535]]
], [3, 4, 4, 3, 2, 2]);
const bandIn = [[882,1692],[980,1638],[1070,1563],[1150,1465],[1210,1370],[1270,1240],[1310,1120],[1335,1028]];
const bandOut = [[1380,1035],[1350,1165],[1310,1285],[1250,1405],[1190,1500],[1120,1585],[1040,1658],[960,1715],[912,1738]];
draw(zebra, area(bandIn, bandOut), INK);

// Contour lines
[
  [[95,1480],[65,1380],[55,1270],[58,1200],[75,1080],[100,1000],[130,920],[165,850],[205,770],[232,700],[245,640],[265,570],[290,502],[320,440],[355,380],[400,322],[450,265],[500,222],[572,175],[640,140],[717,113],[775,101],[835,97],[920,103],[1000,125],[1100,180],[1200,265],[1290,380],[1345,510],[1385,680],[1395,790],[1392,900],[1380,1035]],
  [[537,1756],[480,1680],[430,1580],[375,1460],[320,1315],[300,1200],[285,1080],[275,960],[273,860],[277,745],[290,680],[305,610],[330,540],[355,490],[385,430],[420,385],[460,335],[505,290],[565,243],[630,212],[717,180],[780,166],[835,163],[925,175],[990,193],[1040,215],[1100,258],[1160,310],[1210,370],[1260,450],[1300,540],[1320,620],[1340,720],[1348,850],[1345,930],[1335,1028]],
  [[277,775],[340,690],[390,620],[445,558],[525,487],[605,425],[717,368],[760,353],[825,337],[895,331],[1000,345],[1060,367],[1130,402],[1190,447],[1230,495],[1270,550],[1320,620]],
  stripLeft,
  [[1345,510],[1390,630],[1425,730],[1445,830],[1457,930],[1458,1020],[1453,1110],[1440,1210],[1410,1340],[1370,1450],[1310,1570],[1250,1670],[1180,1750],[1115,1810],[1050,1860],[1005,1892],[940,1925],[870,1948],[790,1956],[700,1943],[640,1918],[600,1895],[560,1865],[510,1835],[460,1820],[400,1810],[320,1785],[240,1735],[180,1670],[130,1590],[95,1480]],
  [[95,1480],[110,1530],[150,1590],[200,1640],[260,1690],[330,1715],[400,1735],[480,1750],[537,1756],[600,1758],[680,1752],[770,1732],[882,1692]],
  [[460,1820],[560,1828],[650,1823],[730,1810],[825,1780],[912,1738]],
  [[572,175],[584,230]]
].forEach(p => draw(zebra, open(p), null, '#555', 1));
```
